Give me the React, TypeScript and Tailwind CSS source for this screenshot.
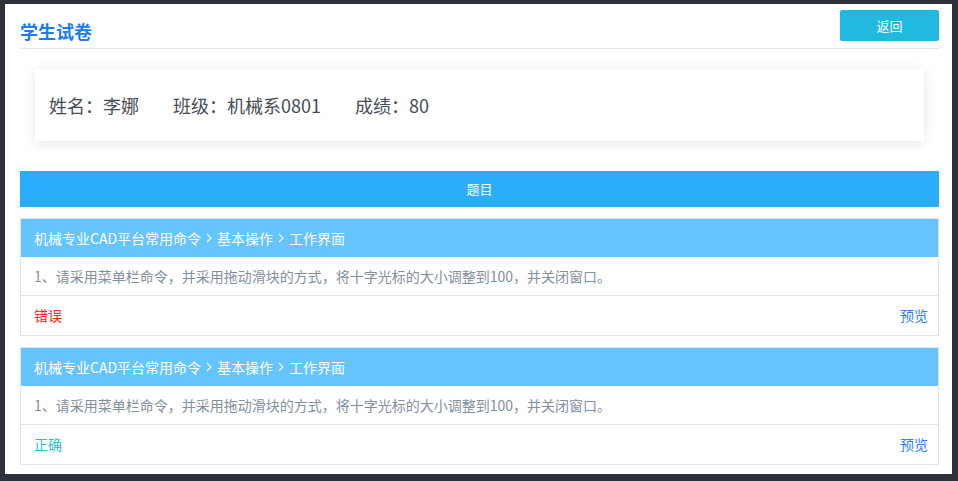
import React from "react";

type Question = {
  path: string[];
  text: string;
  correct: boolean;
};

const questions: Question[] = [
  {
    path: ["机械专业CAD平台常用命令", "基本操作", "工作界面"],
    text: "1、请采用菜单栏命令，并采用拖动滑块的方式，将十字光标的大小调整到100，并关闭窗口。",
    correct: false,
  },
  {
    path: ["机械专业CAD平台常用命令", "基本操作", "工作界面"],
    text: "1、请采用菜单栏命令，并采用拖动滑块的方式，将十字光标的大小调整到100，并关闭窗口。",
    correct: true,
  },
];

function Chevron() {
  return (
    <svg width="8" height="12" viewBox="0 0 8 12" className="mx-[4px] inline-block">
      <path d="M2 2 L6 6 L2 10" fill="none" stroke="#eef7ff" strokeWidth="1.2" />
    </svg>
  );
}

export default function App() {
  return (
    <div
      className="h-[481px] w-[958px] overflow-hidden bg-[#2e3139] pb-[7px] pl-[5px] pr-[6px] pt-[4px]"
      style={{ fontFamily: '"Noto Sans CJK SC", "Noto Sans", "Liberation Sans", sans-serif' }}
    >
      <div className="h-full bg-white pl-[15px] pr-[13px]">
        <div className="flex h-[45px] items-start justify-between border-b border-[#dfe4ed]">
          <h1 className="mt-[16px] text-[18px] font-bold leading-[22px] text-[#1a7df4]">学生试卷</h1>
          <button className="mt-[6px] h-[31px] w-[99px] rounded-[2px] bg-[#22b9e0] text-[13px] text-white">返回</button>
        </div>

        <div className="mx-[15px] mt-[20px] flex h-[72px] items-center gap-[34px] bg-white px-[14px] text-[18px] text-[#454c56] shadow-[0_2px_12px_rgba(0,0,0,0.1)]">
          <span>姓名：李娜</span>
          <span>班级：机械系0801</span>
          <span>成绩：80</span>
        </div>

        <div className="mt-[30px] flex h-[36px] items-center justify-center bg-[#2aaefa] text-[13px] text-white">题目</div>

        {questions.map((q, i) => (
          <div key={i} className="mt-[11px] border border-[#dfe4ed] text-[14px]">
            <div className="flex h-[38px] items-center bg-[#66c4fd] px-[13px] text-white">
              {q.path.map((p, j) => (
                <React.Fragment key={j}>
                  {j > 0 && <Chevron />}
                  <span>{p}</span>
                </React.Fragment>
              ))}
            </div>
            <div className="flex h-[39px] items-center border-b border-[#dfe4ed] px-[13px] text-[#8390a0]">{q.text}</div>
            <div className="flex h-[39px] items-center justify-between pl-[13px] pr-[10px]">
              {q.correct ? (
                <span className="text-[#27c3c9]">正确</span>
              ) : (
                <span className="text-[#ff2020]">错误</span>
              )}
              <span className="text-[#2a7ff4]">预览</span>
            </div>
          </div>
        ))}
      </div>
    </div>
  );
}
